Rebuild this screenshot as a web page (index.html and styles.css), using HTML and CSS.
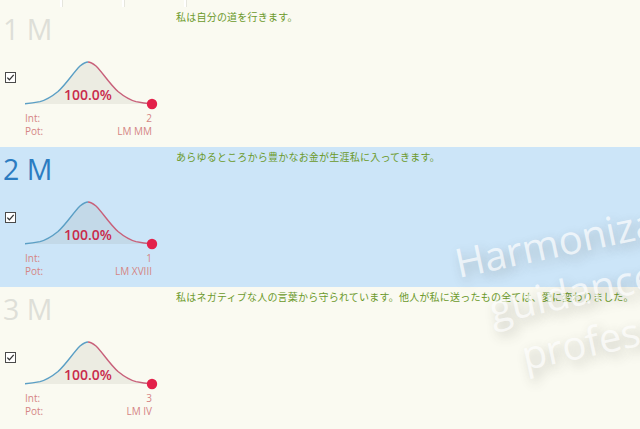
FILE: index.html
```html
<!DOCTYPE html>
<html>
<head>
<meta charset="utf-8">
<link rel="stylesheet" href="styles.css">
</head>
<body>
<div class="list">
  <div class="header"><span class="hcell"></span><span class="hcell"></span><span class="hcell"></span></div>

  <div class="row">
    <div class="left">
      <div class="title">1 M</div>
      <div class="body">
        <span class="check"><svg width="11" height="11" viewBox="0 0 11 11"><rect x="0.5" y="0.5" width="10" height="10" fill="#fff" stroke="#4a4a4a"/><path d="M2.3 5.6 L4.4 7.8 L8.7 2.8" fill="none" stroke="#333" stroke-width="1.3"/></svg></span>
        <div class="gauge">
          <div class="chart">
            <svg width="140" height="55" viewBox="0 0 140 55"><path class="area" d="M5 46.7 C10 46.4 15 45.7 20 44.6 C27 42.8 32 39.4 38 34.5 C46 27.5 53 16 60 9 C64 5.8 66 5 68 5 C70 5 72 5.8 76 9 C83 16 90 27.5 98 34.5 C104 39.4 109 42.8 116 44.6 C121 45.7 126 46.4 132 46.7 L132 47 L5 47 Z"/><path class="lb" d="M5 46.7 C10 46.4 15 45.7 20 44.6 C27 42.8 32 39.4 38 34.5 C46 27.5 53 16 60 9 C64 5.8 66 5 68 5"/><path class="lr" d="M68 5 C70 5 72 5.8 76 9 C83 16 90 27.5 98 34.5 C104 39.4 109 42.8 116 44.6 C121 45.7 126 46.4 132 46.7"/><circle cx="132" cy="47" r="5.2" class="dot"/></svg>
            <span class="pct">100.0%</span>
          </div>
          <div class="kv"><span>Int:</span><span>2</span></div>
          <div class="kv"><span>Pot:</span><span>LM MM</span></div>
        </div>
      </div>
    </div>
    <div class="text">私は自分の道を行きます。</div>
  </div>

  <div class="row selected">
    <div class="left">
      <div class="title">2 M</div>
      <div class="body">
        <span class="check"><svg width="11" height="11" viewBox="0 0 11 11"><rect x="0.5" y="0.5" width="10" height="10" fill="#fff" stroke="#4a4a4a"/><path d="M2.3 5.6 L4.4 7.8 L8.7 2.8" fill="none" stroke="#333" stroke-width="1.3"/></svg></span>
        <div class="gauge">
          <div class="chart">
            <svg width="140" height="55" viewBox="0 0 140 55"><path class="area" d="M5 46.7 C10 46.4 15 45.7 20 44.6 C27 42.8 32 39.4 38 34.5 C46 27.5 53 16 60 9 C64 5.8 66 5 68 5 C70 5 72 5.8 76 9 C83 16 90 27.5 98 34.5 C104 39.4 109 42.8 116 44.6 C121 45.7 126 46.4 132 46.7 L132 47 L5 47 Z"/><path class="lb" d="M5 46.7 C10 46.4 15 45.7 20 44.6 C27 42.8 32 39.4 38 34.5 C46 27.5 53 16 60 9 C64 5.8 66 5 68 5"/><path class="lr" d="M68 5 C70 5 72 5.8 76 9 C83 16 90 27.5 98 34.5 C104 39.4 109 42.8 116 44.6 C121 45.7 126 46.4 132 46.7"/><circle cx="132" cy="47" r="5.2" class="dot"/></svg>
            <span class="pct">100.0%</span>
          </div>
          <div class="kv"><span>Int:</span><span>1</span></div>
          <div class="kv"><span>Pot:</span><span>LM XVIII</span></div>
        </div>
      </div>
    </div>
    <div class="text">あらゆるところから豊かなお金が生涯私に入ってきます。</div>
  </div>

  <div class="row">
    <div class="left">
      <div class="title">3 M</div>
      <div class="body">
        <span class="check"><svg width="11" height="11" viewBox="0 0 11 11"><rect x="0.5" y="0.5" width="10" height="10" fill="#fff" stroke="#4a4a4a"/><path d="M2.3 5.6 L4.4 7.8 L8.7 2.8" fill="none" stroke="#333" stroke-width="1.3"/></svg></span>
        <div class="gauge">
          <div class="chart">
            <svg width="140" height="55" viewBox="0 0 140 55"><path class="area" d="M5 46.7 C10 46.4 15 45.7 20 44.6 C27 42.8 32 39.4 38 34.5 C46 27.5 53 16 60 9 C64 5.8 66 5 68 5 C70 5 72 5.8 76 9 C83 16 90 27.5 98 34.5 C104 39.4 109 42.8 116 44.6 C121 45.7 126 46.4 132 46.7 L132 47 L5 47 Z"/><path class="lb" d="M5 46.7 C10 46.4 15 45.7 20 44.6 C27 42.8 32 39.4 38 34.5 C46 27.5 53 16 60 9 C64 5.8 66 5 68 5"/><path class="lr" d="M68 5 C70 5 72 5.8 76 9 C83 16 90 27.5 98 34.5 C104 39.4 109 42.8 116 44.6 C121 45.7 126 46.4 132 46.7"/><circle cx="132" cy="47" r="5.2" class="dot"/></svg>
            <span class="pct">100.0%</span>
          </div>
          <div class="kv"><span>Int:</span><span>3</span></div>
          <div class="kv"><span>Pot:</span><span>LM IV</span></div>
        </div>
      </div>
    </div>
    <div class="text">私はネガティブな人の言葉から守られています。他人が私に送ったもの全ては、愛に変わりました。</div>
  </div>
</div>

<div class="watermark">
  <div class="wm-line l1">Harmonization</div>
  <div class="wm-line l2">guidance</div>
  <div class="wm-line l3">professional</div>
</div>
</body>
</html>
```

FILE: styles.css
```css
html, body {
  margin: 0;
  padding: 0;
}
body {
  width: 640px;
  height: 429px;
  overflow: hidden;
  background: #fafaf1;
  font-family: "Open Sans", "Noto Sans", sans-serif;
  position: relative;
}
.list {
  display: flex;
  flex-direction: column;
}
.header {
  height: 7px;
  display: flex;
}
.hcell {
  box-sizing: border-box;
  width: 62px;
  height: 7px;
  border-right: 2px solid #ffffff;
  box-shadow: 1px 0 0 #e6e6de;
}
.row {
  height: 140px;
  display: flex;
  background: #fafaf1;
}
.row.selected {
  background: #cce5f8;
}
.left {
  width: 170px;
  flex: none;
}
.title {
  margin-top: 5px;
  padding-left: 3px;
  height: 34px;
  font-size: 28.5px;
  line-height: 34px;
  color: #dedfd8;
  white-space: nowrap;
}
.selected .title {
  color: #2b7cc1;
}
.body {
  display: flex;
  margin-top: 11px;
}
.check {
  margin-left: 5px;
  margin-top: 15px;
  width: 11px;
  height: 11px;
  display: block;
}
.check svg {
  display: block;
}
.gauge {
  margin-left: 4px;
  width: 140px;
}
.chart {
  position: relative;
  height: 55px;
}
.chart svg {
  display: block;
}
.area {
  fill: rgba(120, 120, 100, 0.1);
}
.lb {
  fill: none;
  stroke: #5b9fc5;
  stroke-width: 1.4;
}
.lr {
  fill: none;
  stroke: #c8607a;
  stroke-width: 1.4;
}
.dot {
  fill: #e3204a;
}
.pct {
  position: absolute;
  left: 0;
  top: 31px;
  width: 136px;
  text-align: center;
  font-size: 14px;
  line-height: 14px;
  font-weight: 600;
  color: #c92a4c;
}
.kv {
  display: flex;
  justify-content: space-between;
  padding: 0 8px 0 5px;
  font-size: 10px;
  line-height: 13px;
  color: #d58585;
}
.text {
  margin-left: 6px;
  padding-top: 3px;
  font-family: "Noto Sans CJK JP", sans-serif;
  font-size: 10px;
  letter-spacing: 0.22px;
  line-height: 14px;
  color: #6b992a;
  white-space: nowrap;
}
.watermark {
  position: absolute;
  left: 450px;
  top: 238px;
  transform: rotate(-12deg);
  transform-origin: 0 0;
  font-family: "Open Sans", sans-serif;
  font-size: 40px;
  line-height: 52px;
  color: rgba(255, 255, 255, 0.7);
  text-shadow: 3px 5px 12px rgba(60, 60, 50, 0.28);
  white-space: nowrap;
  pointer-events: none;
}
.wm-line.l2 {
  margin-left: 24px;
}
.wm-line.l3 {
  margin-left: 46px;
}
```
